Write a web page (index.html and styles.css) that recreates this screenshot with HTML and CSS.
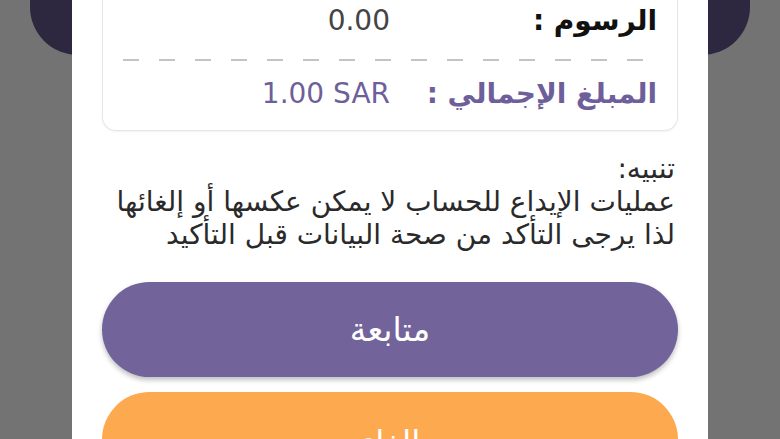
FILE: index.html
```html
<!DOCTYPE html>
<html lang="ar" dir="rtl">

<head>
    <meta charset="UTF-8">
    <meta name="viewport" content="width=device-width, initial-scale=1.0">
    <title>تأكيد الإيداع</title>
    <link rel="stylesheet" href="styles.css">
</head>

<body>
    <div class="backdrop-bar"></div>

    <section class="sheet">
        <div class="summary">
            <div class="row">
                <span class="label">الرسوم :</span>
                <span class="value" dir="ltr">0.00</span>
            </div>
            <div class="divider"></div>
            <div class="row total">
                <span class="label">المبلغ الإجمالي :</span>
                <span class="value" dir="ltr">1.00 SAR</span>
            </div>
        </div>

        <p class="notice">تنبيه:<br>عمليات الإيداع للحساب لا يمكن عكسها أو إلغائها<br>لذا يرجى التأكد من صحة البيانات قبل التأكيد</p>

        <button class="btn btn-continue">متابعة</button>
        <button class="btn btn-cancel">إلغاء</button>
    </section>
</body>

</html>
```

FILE: styles.css
```css
html,
body {
    margin: 0;
    height: 100%;
    overflow: hidden;
}

body {
    background-color: #737373;
    font-family: "DejaVu Sans", sans-serif;
    position: relative;
}

/* dimmed header of the page under the dialog */
.backdrop-bar {
    position: absolute;
    top: -100px;
    left: 30px;
    right: 30px;
    height: 155px;
    border-radius: 0 0 48px 48px;
    background-color: #2d2740;
}

.sheet {
    position: relative;
    margin: -30px 72px 0;
    padding: 0 30px 40px;
    background-color: #fff;
    height: 520px;
    box-sizing: border-box;
}

.summary {
    border: 1.5px solid #e6e6e8;
    border-top: none;
    border-radius: 0 0 14px 14px;
    padding: 25px 20px 12px;
    box-shadow: 0 1px 2px rgba(0, 0, 0, 0.06);
}

.row {
    display: flex;
    height: 50px;
    align-items: center;
    font-size: 28px;
}

.row .label {
    flex: 1;
    color: #111;
    font-weight: bold;
}

.row .value {
    flex: 1;
    text-align: right;
    color: #444;
}

.row.total .label,
.row.total .value {
    color: #6e5f9b;
}

.divider {
    height: 2px;
    margin: 14px 0 7px;
    background: repeating-linear-gradient(to right, #c4c4c4 0 16px, transparent 16px 36px);
}

.notice {
    margin: 21px 3px 31px 0;
    font-size: 28px;
    line-height: 33px;
    color: #2a2a2a;
}

.btn {
    display: block;
    width: 100%;
    height: 95px;
    border: none;
    border-radius: 48px;
    font-family: "DejaVu Sans", sans-serif;
    font-size: 33px;
    color: #fff;
}

.btn-continue {
    background-color: #72639b;
    box-shadow: 0 3px 5px rgba(0, 0, 0, 0.25);
}

.btn-cancel {
    margin-top: 15px;
    padding-top: 6px;
    background-color: #fda950;
}
```
